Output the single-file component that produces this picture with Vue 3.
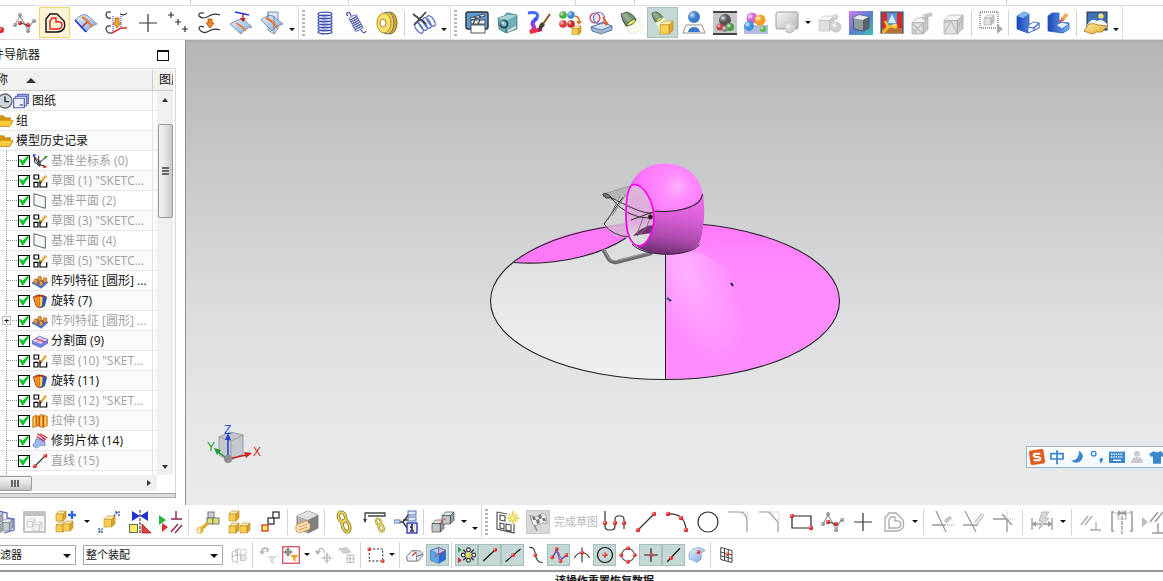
<template>
	<div class="app">
		<svg class="defs" aria-hidden="true">
			<defs>
				<linearGradient id="gBlue" x1="0" y1="0" x2="1" y2="1">
					<stop offset="0" stop-color="#e6f0fb" />
					<stop offset="1" stop-color="#7ea6da" />
				</linearGradient>
				<linearGradient id="gGold" x1="0" y1="0" x2="1" y2="1">
					<stop offset="0" stop-color="#fff3b0" />
					<stop offset="1" stop-color="#e0a21c" />
				</linearGradient>
				<linearGradient id="gGray" x1="0" y1="0" x2="1" y2="1">
					<stop offset="0" stop-color="#fafafa" />
					<stop offset="1" stop-color="#b4b4b4" />
				</linearGradient>
				<linearGradient id="gLamp" x1="0" y1="1" x2="1" y2="0">
					<stop offset="0" stop-color="#34503a" />
					<stop offset="0.5" stop-color="#9ab494" />
					<stop offset="1" stop-color="#3c5a40" />
				</linearGradient>
				<linearGradient id="gDeep" x1="0" y1="0" x2="1" y2="0">
					<stop offset="0" stop-color="#1747b8" />
					<stop offset="1" stop-color="#7fb0f0" />
				</linearGradient>
				<linearGradient id="gRain" x1="0" y1="0" x2="0" y2="1">
					<stop offset="0" stop-color="#2a5bff" />
					<stop offset="0.5" stop-color="#a03be0" />
					<stop offset="1" stop-color="#ff2a3c" />
				</linearGradient>
				<linearGradient id="gScene" x1="0" y1="0" x2="1" y2="1">
					<stop offset="0" stop-color="#d07cf0" />
					<stop offset="0.5" stop-color="#5a7fd0" />
					<stop offset="1" stop-color="#3cc0a8" />
				</linearGradient>
			</defs>
		</svg>

		<header class="top">
			<div class="strip">
				<i v-for="w in [191, 158, 227, 59, 372]" :key="w" :style="{ width: w + 'px' }"></i>
			</div>
			<nav class="bar">
				<div v-for="(group, g) in topGroups" :key="g" class="group">
					<span v-if="g" class="grip"></span>
					<template v-for="(item, i) in group" :key="i">
						<span v-if="item === '|'" class="sep"></span>
						<button v-else-if="item === 'v' || item === 'V'" :class="item === 'v' ? 'more' : 'more low'" aria-label="更多"></button>
						<button v-else :class="['tool', item, { on: active.has(item) }]" :aria-label="item" @click="toggle(item)">
							<svg viewBox="0 0 24 24" v-html="icons[item]"></svg>
						</button>
					</template>
				</div>
			</nav>
		</header>

		<main class="work">
			<aside class="side">
				<div class="title">
					<span>部件导航器</span>
					<button class="max" aria-label="最大化"></button>
				</div>
				<div class="frame">
					<div class="head">
						<span class="name">名称</span>
						<i class="tri up big"></i>
						<span class="layer">图层</span>
					</div>
					<div class="body">
						<ul class="list">
							<li v-for="(row, r) in rows" :key="r" :class="{ root: row.root, dim: row.dim, first: r === 0 }">
								<template v-if="row.root">
									<svg v-if="r === 0" viewBox="0 0 24 24" v-html="icons.clock"></svg>
									<svg viewBox="0 0 24 24" v-html="icons[row.icon]"></svg>
									<span>{{ row.text }}</span>
								</template>
								<template v-else>
									<span class="twig"><b v-if="row.plus">+</b></span>
									<label>
										<input v-model="row.checked" type="checkbox" />
										<svg viewBox="0 0 24 24" v-html="icons[row.icon]"></svg>
										<span>{{ row.text }}</span>
									</label>
								</template>
							</li>
						</ul>
						<div class="vscroll">
							<i class="tri up"></i>
							<div class="thumb"><i></i><i></i><i></i></div>
							<i class="tri down"></i>
						</div>
					</div>
					<div class="hscroll">
						<div class="hthumb"><i></i><i></i><i></i></div>
						<i class="tri right"></i>
					</div>
				</div>
				<div class="ledge"></div>
			</aside>

			<section class="view">
				<svg class="scene" viewBox="186 42 977 463" preserveAspectRatio="xMidYMid meet">
					<defs>
						<linearGradient id="white" x1="0" y1="0" x2="0" y2="1">
							<stop offset="0.2" stop-color="#dddee0" />
							<stop offset="0.5" stop-color="#e5e7e9" />
							<stop offset="1" stop-color="#eff0f2" />
						</linearGradient>
						<radialGradient id="skirt" gradientUnits="userSpaceOnUse" cx="0" cy="0" r="1" gradientTransform="translate(686 270) rotate(65) scale(100 40)">
							<stop offset="0" stop-color="#ffb0ff" />
							<stop offset="0.4" stop-color="#ffa2ff" />
							<stop offset="1" stop-color="#ff8dff" />
						</radialGradient>
						<linearGradient id="far" x1="0" y1="0" x2="0" y2="1">
							<stop offset="0" stop-color="#ff78fc" />
							<stop offset="0.6" stop-color="#ff84fe" stop-opacity="0.5" />
							<stop offset="1" stop-color="#ff90ff" stop-opacity="0" />
						</linearGradient>
						<radialGradient id="dome" gradientUnits="userSpaceOnUse" cx="677" cy="187" r="46">
							<stop offset="0" stop-color="#ffb0ff" />
							<stop offset="0.3" stop-color="#ff8cfe" />
							<stop offset="0.8" stop-color="#fd74fa" />
							<stop offset="1" stop-color="#ec68ea" />
						</radialGradient>
						<linearGradient id="neck" x1="0.6" y1="0" x2="0.45" y2="1">
							<stop offset="0.3" stop-color="#f06cec" />
							<stop offset="0.55" stop-color="#d85ed6" />
							<stop offset="0.8" stop-color="#ac4aac" />
							<stop offset="1" stop-color="#6c2c70" />
						</linearGradient>
						<linearGradient id="glass" x1="0" y1="0" x2="0" y2="1">
							<stop offset="0" stop-color="#ddb6dc" />
							<stop offset="0.6" stop-color="#e2a8de" />
							<stop offset="0.85" stop-color="#dcdcdc" />
						</linearGradient>
					</defs>

					<ellipse cx="665" cy="301" rx="174.500" ry="78.500" fill="url(#white)" />
					<path d="M665 250V379.500A174.500 78.500 0 0 0 704 224.500Z" fill="url(#skirt)" />
					<path d="M680 250L704 224.500A174.500 78.500 0 0 1 839 296C790 300 740 282 704 254Z" fill="url(#far)" />
					<path d="M514 262.500C545 235 590 227 640 223L626 238C592 260 545 265 514 262.500Z" fill="#fc7af8" />
					<path d="M514 262.500C545 265 592 260 626 238" fill="none" stroke="#222" stroke-width="1.100" />
					<ellipse cx="665" cy="301" rx="174.500" ry="78.500" fill="none" stroke="#222" stroke-width="1.100" />
					<path d="M665.500 254V379" stroke="#222" stroke-width="1" />
					<path d="M603 249L608 258Q611 263 617 262L652 253" fill="none" stroke="#6e6e6e" stroke-width="4" />
					<path d="M604 249L609 258Q612 261.500 617 260.500L651 252" fill="none" stroke="#a4a4a4" stroke-width="1" />

					<path d="M604 194L626 187L640 184L632 194L612 200Z" fill="#b4b5b6" stroke="#888" stroke-width="0.700" />
					<path d="M612 200L626 194L630 236L616 236L604 226Z" fill="#d4d4d4" fill-opacity="0.700" />
					<path d="M604 226L630 222V238Q614 236 604 226Z" fill="#d9a8d6" fill-opacity="0.700" />

					<path d="M626 210C626 192 630 183 638 176L646 168L703 194C706 214 703 234 699 244C692 252 677 255 665 254.500C650 254 636 249 630 240C626 232 625 222 626 210Z" fill="url(#neck)" />
					<path d="M627 200C629 176 645 163.500 665 163.500C687 163.500 702 178 702.500 195C698 207 676 213 652 211C646 195 640 186 632 185Z" fill="url(#dome)" />
					<path d="M652 211C676 213 701 208 702.500 194" fill="none" stroke="#222" stroke-width="1.100" />
					<path d="M632 244C642 257 688 258 699 245" fill="none" stroke="#33203a" stroke-width="1" />

					<path d="M633.500 184.500C644 184 654 202 654 218C654 234 646 246 639 246C630 245 626 232 626 215C626 198 628 186 633.500 184.500Z" fill="url(#glass)" />
					<path d="M633 236Q642 226 653 225V233Q642 234 633 236Z" fill="#703070" />
					<g fill="none" stroke="#333" stroke-width="1">
						<path d="M603 194Q606 192 611 197Q606 200 603 195Z" fill="#777" />
						<path d="M610 197Q628 219 650 218M610 197C628 206 642 214 653 213M623 197L604 224Q612 236 630 237M631 220L653 212" />
						<path d="M650 214Q650 228 637 236M620 196L608 220M626 194L612 216M643 218L637 234" stroke="#777" />
					</g>
					<circle cx="650.500" cy="217" r="2.400" fill="#222" />
					<path d="M633.500 184.500C644 184 654 202 654 218C654 234 646 246 639 246C630 245 626 232 626 215C626 198 628 186 633.500 184.500Z" fill="none" stroke="#ff00f4" stroke-width="1.700" />
					<path d="M667 298L671 301M731 283L733 286" stroke="#223" stroke-width="2" />
					<path d="M667 298L670 300" stroke="#2a62d8" stroke-width="1.500" />

					<g stroke-width="1.500" fill="none">
						<path d="M219 437L230 432L243 435V454L229 461L219 455Z" fill="#c4c8cc" stroke="#9a9fa4" stroke-width="1" />
						<path d="M219 437L231 441L243 435M231 441V460" stroke="#9a9fa4" stroke-width="1" />
						<path d="M228 459V438" stroke="#1b3fd0" />
						<path d="M225 440L228 433L231 440Z" fill="#1b3fd0" stroke="none" />
						<path d="M228 459L246 455" stroke="#d02020" />
						<path d="M244 452L252 453L246 458Z" fill="#d02020" stroke="none" />
						<path d="M228 459L218 452" stroke="#1f9a30" />
						<path d="M214 448L221 450L217 455Z" fill="#1f9a30" stroke="none" />
						<circle cx="228" cy="459" r="4" fill="#8c9094" stroke="none" />
					</g>
					<text x="224" y="434" fill="#2050e0">Z</text>
					<text x="207" y="451" fill="#1f9a30">Y</text>
					<text x="253" y="456" fill="#e02828">X</text>
				</svg>
				<div class="ime">
					<svg v-for="n in ['sogou', 'zh', 'moon', 'punct', 'keys', 'user', 'shirt']" :key="n" viewBox="0 0 24 24" v-html="icons[n]"></svg>
				</div>
			</section>
		</main>

		<footer>
			<nav v-for="(bar, n) in bottomBars" :key="n" :class="n ? 'bar small' : 'bar'">
				<template v-if="n">
					<label class="pick filter">
						<select aria-label="选择过滤器"><option>无选择过滤器</option></select>
					</label>
					<label class="pick">
						<select aria-label="选择范围"><option>整个装配</option></select>
					</label>
				</template>
				<div v-for="(group, g) in bar" :key="g" class="group">
					<span v-if="g" class="grip"></span>
					<template v-for="(item, i) in group" :key="i">
						<span v-if="item === '|'" class="sep"></span>
						<button v-else-if="item === 'v' || item === 'V'" :class="item === 'v' ? 'more' : 'more low'" aria-label="更多"></button>
						<button v-else-if="item === 'finish'" class="finish" disabled>
							<svg viewBox="0 0 24 24" v-html="icons.finish"></svg>
							<span>完成草图</span>
						</button>
						<button v-else :class="['tool', item, { on: active.has(item) }]" :aria-label="item" @click="toggle(item)">
							<svg viewBox="0 0 24 24" v-html="icons[item]"></svg>
						</button>
					</template>
				</div>
			</nav>
			<p class="status">该操作重置恢复数据</p>
		</footer>
	</div>
</template>

<script setup>
import { ref } from 'vue'

const YELLOW = ['#fff0a8', '#fbd050', '#e0a428']
const GRAY = ['#f4f4f4', '#e0e0e0', '#c8c8c8']
const STEEL = ['#e2e8ea', '#c0c8cc', '#98a2a8']

// small shapes shared by many icons
const line = (d, c = '#333', w = 1.2, extra = '') => `<path d="${d}" fill="none" stroke="${c}" stroke-width="${w}" ${extra}/>`
const fill = (d, c, s = 'none') => `<path d="${d}" fill="${c}" stroke="${s}" stroke-width=".8"/>`
const ball = (x, y, r = 2, c = '#e02828') => `<circle cx="${x}" cy="${y}" r="${r}" fill="${c}"/><circle cx="${x - r / 3}" cy="${y - r / 3}" r="${r * 0.6}" fill="#fff" fill-opacity=".25"/><circle cx="${x - r / 3}" cy="${y - r / 3}" r="${r * 0.3}" fill="#fff" fill-opacity=".6"/>`
const cube = (x, y, s, [t, f, e] = YELLOW, k = '#b08828') => {
	const a = s * 0.3
	const b = s * 0.7
	return `<g stroke="${k}" stroke-width=".6" stroke-linejoin="round">`
		+ `<path d="M${x + a} ${y}h${b}l${-a} ${a}h${-b}z" fill="${t}"/>`
		+ `<path d="M${x} ${y + a}h${b}v${b}h${-b}z" fill="${f}"/>`
		+ `<path d="M${x + b} ${y + a}l${a} ${-a}v${b}l${-a} ${a}z" fill="${e}"/></g>`
}
const spline = line('M3 14L8 5L16 19L21 10', '#999', 1.2) + ball(3, 14, 2, '#888') + ball(8, 4, 2, '#888') + ball(16, 20, 2, '#888') + ball(22, 10, 2, '#888') + ball(8, 12, 2.2) + ball(16, 14, 2.2) + line('M8 12L16 14', '#444')
const sheet = fill('M1 9Q8 2 13 4L23 13Q17 14 12 21Z', 'url(#gBlue)', '#6a7fa8')
const lamp = fill('M1 3L7 1Q13 3 16 8L6 15Q2 10 1 3Z', 'url(#gLamp)', '#34483a') + fill('M6 15Q9 9 16 8Q15 14 6 15Z', '#e8ec60', '#34483a')
const sketch = '<g fill="#fff" stroke="#000" stroke-width="1.8"><path d="M3 3h7v6h-7zM3 14h6v7h-6zM12 11v10h10v-7"/></g>' + line('M13 14L21 4', '#e8a020', 3) + line('M12 16L14 13', '#222', 2)
const loop = (c, w) => line('M3 21V8L7 3H14L21 10Q24 20 14 21Z', c, w) + line('M7 18V10L9 7H13V11Q19 10 19 14Q19 18 14 18Z', c === '#111' ? '#e82020' : c, w)
const chain = (x, y, s) => `<g transform="translate(${x} ${y}) scale(${s})" fill="none" stroke="#8c7c20" stroke-width="3.4"><ellipse cx="7" cy="6" rx="3.500" ry="5" transform="rotate(-20 7 6)"/><ellipse cx="11" cy="15" rx="3.500" ry="6" transform="rotate(-20 11 15)"/><g stroke="#ead860" stroke-width="1.8"><ellipse cx="7" cy="6" rx="3.500" ry="5" transform="rotate(-20 7 6)"/><ellipse cx="11" cy="15" rx="3.500" ry="6" transform="rotate(-20 11 15)"/></g></g>`
const turn = fill('M2 6Q12 0 22 6L19 19Q12 25 6 19Z', '#2a55c8', '#233') + fill('M2 6Q8 2 12 3V22Q8 22 6 19Z', '#f09020', '#a03010') + fill('M12 5L16 6L15 19L12 21Z', '#ffd050') + line('M5 6Q12 2 19 6', '#c03018', 2)
const faded = (s) => `<g opacity=".45">${s}</g>`
const springLoops = (c) => [3, 6, 9, 12, 15, 18, 21].map((y) => `<ellipse cx="12" cy="${y}" rx="7" ry="1.8" fill="none" stroke="${c}" stroke-width="1.3"/>`).join('')

const icons = {
	dot: ball(20, 19, 3),
	spline,
	offset: loop('#111', 1.4),
	project: sheet + line('M8 6Q14 9 18 16', '#f07828', 2) + line('M7 17L13 11', '#d02020', 1.3) + line('M1 9L12 21', '#2038e0', 1.8),
	combine: line('M6 1Q1 0 1 4Q2 8 6 7M15 3Q20 5 22 2M6 15Q1 14 1 18Q2 23 7 22') + line('M8 5V20M16 5V18', '#3848d0', 1.2, 'stroke-dasharray="1 1"') + line('M7 22L16 17L22 17', '#e03030', 1.5) + fill('M10 7H14V12H16L12 17L8 12H10Z', '#f0a030', '#b07010'),
	plus: line('M12 3V21M3 12H21', '#333', 1.2),
	pluses: line('M4 1V7M1 4H7M11 8V14M8 11H14M18 15V21M15 18H21', '#333', 1.2),
	mirror: line('M6 2Q0 1 1 5Q5 9 11 5Q16 2 22 4M6 16Q1 14 1 18Q5 24 11 20Q16 17 22 19') + fill('M10 8H14V12H16L12 17L8 12H10Z', '#f08020', '#b05010'),
	drop: fill('M1 13Q8 8 14 8L23 16Q16 17 12 23Z', 'url(#gBlue)', '#6a7fa8') + line('M7 12Q13 15 17 20', '#f07828', 1.8) + line('M6 1L20 4', '#2038e0', 1.6) + line('M14 3V8', '#c02020', 1.4) + fill('M11 7H17L14 11Z', '#c02020'),
	cross: fill('M8 1H18V18L14 23L8 19Z', '#dfe9f6', '#60789a') + fill('M1 9Q8 3 13 5L23 13Q17 14 12 20Z', 'url(#gBlue)', '#60789a') + line('M8 1V7M14 5V23', '#60789a', 0.8) + line('M6 7Q13 10 17 17', '#f07828', 2),
	spring: springLoops('#3a4cb0'),
	spring2: `<g transform="translate(12 12) rotate(-28) scale(.62 .72) translate(-12 -12)">${springLoops('#4452a8')}</g>` + line('M7 5Q6 0 3 2Q2 4 4 5M17 19Q20 24 22 20', '#4452a8'),
	wheel: '<ellipse cx="15" cy="12" rx="7" ry="11" fill="#d8aa28" stroke="#8a6a10"/><ellipse cx="12" cy="12" rx="7" ry="11" fill="#f0cc48" stroke="#6070a0"/><ellipse cx="9" cy="12" rx="7" ry="10" fill="#fbe070" stroke="#b08c20"/><ellipse cx="8" cy="12" rx="3" ry="4" fill="#fff" stroke="#a88420"/>',
	springcut: '<g fill="none" stroke="#5a70c0" stroke-width="1.4"><ellipse cx="7" cy="17" rx="3" ry="6" transform="rotate(-35 7 17)"/><ellipse cx="11" cy="14" rx="3" ry="6" transform="rotate(-35 11 14)"/><ellipse cx="15" cy="12" rx="3" ry="6" transform="rotate(-35 15 12)"/><ellipse cx="19" cy="10" rx="3" ry="6" transform="rotate(-35 19 10)"/></g>' + line('M1 3L14 13M14 1L2 14', '#444', 1.8),
	movie: '<rect x="1" y="1" width="22" height="17" rx="2" fill="#5a9ad8" stroke="#333" stroke-width="1.500"/>' + fill('M5 7L19 3L20 5L6 9ZM6 9H20V13H6Z', '#f4f4f4', '#333') + line('M9 6L12 7M14 5L16 6M10 9L8 13M15 9L13 13', '#333', 1.2) + '<rect x="6" y="14" width="14" height="8" fill="#fff" stroke="#555"/>',
	camera: fill('M2 7L8 5L11 2L16 3L21 4V18L10 22L3 18Z', '#6eb0b4', '#3c7478') + fill('M2 7L10 10L21 4L12 4Z', '#a8d4d4') + line('M10 10V21', '#3c7478') + ball(8, 13, 4.5, '#285058') + ball(8, 13, 2.5, '#88b8e0') + line('M12 20L20 16', '#ddd', 2),
	brush: line('M1 2Q13 0 10 7Q5 12 6 15', '#4a68ff', 3) + line('M10 7Q4 12 6 14Q9 18 3 21L15 18', 'url(#gRain)', 4) + line('M23 3L16 13', '#8a5428', 2) + fill('M15 11L18 14L12 21Q11 16 13 13Z', '#4a3a30'),
	materials: ball(5, 4, 3.8, '#48b040') + ball(13, 4, 3.8, '#3c8cd0') + ball(5, 13, 3.8, '#e03838') + ball(13, 13, 3.8, '#c82828') + cube(14, 15, 9) + line('M17 5Q22 6 21 11', '#e07020', 1.5) + fill('M18 10H24L21 14Z', '#e07020'),
	stamp: '<circle cx="6" cy="7" r="5" fill="#f6e0ea" stroke="#c04068" stroke-width="1.200"/><circle cx="10" cy="7" r="5.500" fill="none" stroke="#5878c8" stroke-width="1.200"/>' + fill('M2 16L14 12L23 15V19L12 23L3 20Z', '#a0b8d8', '#506890') + fill('M2 16L14 12L23 15L12 19Z', '#d8e4f4', '#506890') + line('M14 6L17 11', '#e06020', 1.8) + fill('M14 11H20L17 15Z', '#e06020'),
	lamp: fill('M6 15L16 8L24 15Q20 22 10 23Z', '#f8f8ec', '#e4e4dc') + lamp,
	lampbox: fill('M5 12L12 7L22 13L9 22Z', '#f2f4d8') + `<g transform="scale(.72)">${lamp}</g>` + cube(9, 10, 13),
	usermat: ball(12, 6, 6, '#3a7ad0') + fill('M4 14H20L23 22H1Z', '#fff', '#777') + fill('M6 21Q7 16 12 16Q17 16 18 21Z', '#3a7ad0'),
	studio: '<rect width="24" height="24" fill="#c8c8c8"/><path d="M0 0H24V2H0ZM0 22H24V24H0Z" fill="#444"/>' + ball(12, 9, 6, '#555') + ball(7, 16, 3.6, '#c83838') + ball(17, 16, 4, '#48a040') + ball(12, 18, 3, '#888'),
	balls: '<rect y="14" width="24" height="9" fill="#b4bce0"/>' + ball(8, 7, 5.5, '#d060d0') + ball(16, 9, 5.5, '#f8a020') + ball(5, 15, 5, '#3c94e0') + ball(19, 18, 3, '#50c040'),
	screen: '<rect x="1" y="1" width="22" height="17" rx="2" fill="url(#gGray)" stroke="#999"/>' + ball(15, 17, 5, '#d4d4d4') + line('M11 20Q15 24 19 19', '#bbb'),
	shapes: cube(1, 5, 15, GRAY, '#bbb') + ball(17, 6, 3, '#ccc') + ball(18, 16, 5.5, '#ccc'),
	cubeview: '<rect width="24" height="24" fill="url(#gScene)"/>' + fill('M4 7L10 4L20 6V17L14 20L5 18Z', '#8e9ca0', '#445') + fill('M4 7L10 4L20 6L14 9Z', '#e8eeee') + fill('M14 9L20 6V17L14 20Z', '#56646a'),
	stage: '<rect x="1" y="1" width="22" height="21" fill="#5a94d8" stroke="#333"/><path d="M2 2H7V18H2ZM17 2H22V18H17Z" fill="#d82828"/><path d="M2 17H22V22H2Z" fill="#b87038"/>' + fill('M12 3L8 12H16Z', '#d8ecf8') + line('M3 22L8 16L14 15', '#e8b828', 3) + line('M8 16L5 10', '#f4cc40', 2.5) + ball(15, 15, 2.5, '#f4cc40'),
	wirecam: cube(1, 7, 16, GRAY, '#999') + line('M1 12L12 23M1 17L6 23M2 22L12 12', '#bbb') + line('M12 6L21 3', '#c4c4c4', 4) + ball(14, 6, 3, '#bbb'),
	wirebox: cube(2, 4, 19, GRAY, '#999') + line('M2 12L9 10L15 22M3 21L9 10M21 6L16 16', '#bbb'),
	region: '<rect x="1" y="1" width="18" height="16" fill="#fff" stroke="#777" stroke-width="1.300" stroke-dasharray="1 1"/>' + cube(5, 4, 10, GRAY, '#aaa') + fill('M18 13L24 18L18 23Z', '#aaa'),
	block: fill('M1 5L8 1L13 3V13L23 12V17L12 22L1 18Z', 'url(#gDeep)', '#2858b8') + fill('M1 5L8 1L13 3L7 7Z', '#8ab4f0') + fill('M12 15L17 11L23 12V17L12 22Z', '#fff', '#3468c8') + line('M12 16L18 17L23 12M18 17V20', '#3468c8'),
	blockedit: fill('M1 5L5 2H12V11L22 12V18L16 22L1 20Z', 'url(#gDeep)', '#2858b8') + fill('M9 14L15 11L22 13L15 18Z', '#e4eefc', '#3468c8') + line('M20 3L15 9', '#f0b060', 4) + line('M16 8L13 11', '#d86060', 3),
	landscape: '<rect x="3" y="1" width="20" height="18" fill="#3c70b0" stroke="#234"/>' + ball(17, 5, 2.6, '#ffe060') + fill('M3 14Q8 6 13 10Q18 7 23 13V17H3Z', '#f4f4f4') + fill('M5 13Q10 12 14 14L23 15L18 21Q12 20 8 23L0 20Z', 'url(#gGold)', '#b06818'),

	boxes: `<g opacity=".9">${cube(-2, 3, 13, STEEL, '#667')}${cube(9, 9, 12, STEEL, '#667')}${cube(0, 12, 11, STEEL, '#667')}</g>` + line('M6 1L15 3V8L22 9V20L12 23', '#5a62c0', 1.3),
	window: faded('<rect x="1" y="2" width="21" height="20" fill="#eee" stroke="#555" stroke-width="1.500"/><path d="M1 2H22V6H1Z" fill="#777"/>' + cube(4, 9, 8, GRAY, '#777') + cube(10, 12, 9, GRAY, '#777')),
	addcomp: cube(2, 1, 10) + cube(2, 12, 10) + cube(9, 11, 10) + line('M18 1V9M14 5H22', '#2a68d8', 2.4),
	move: cube(7, 6, 11) + line('M17 6L21 2M2 22L6 18M18 2H22V6M2 18V22H6', '#3a58b0', 1.4, 'stroke-dasharray="2 1"'),
	mirrorasm: fill('M4 1L12 6L4 11ZM20 1L12 6L20 11Z', '#2430d0') + line('M12 0V24', '#444', 1.2, 'stroke-dasharray="3 1"') + '<rect x="1.500" y="14.500" width="8" height="8" fill="#f8f060" stroke="#666"/>' + fill('M14 14V23H23Z', '#e04040', '#a02020'),
	constrain: fill('M0 5L7 10L0 15Z', '#30b040') + fill('M3 13L9 17L3 22Z', '#d83030') + line('M17 1V9M12 9H23M12 22L19 14M16 23L23 15', '#8a2850', 1.4),
	wrench: '<g stroke="#777" fill="#dde070"><rect x="12" y="2" width="6" height="6" fill="#c8d0dc"/><rect x="11" y="8" width="6" height="6"/><rect x="17" y="8" width="6" height="6"/></g>' + line('M4 20L12 13', '#d8ac30', 3.5) + ball(4, 20, 3.5, '#e0b838') + '<circle cx="3" cy="21" r="1.500" fill="#fff"/>',
	tricube: cube(2, 1, 10) + cube(2, 13, 10) + cube(13, 13, 10),
	stack: '<g fill="#fff" stroke="#333" stroke-width="1.300"><rect x="15" y="2" width="6" height="6"/><rect x="10" y="8" width="6" height="6"/><rect x="4" y="15" width="6" height="6" fill="#f8f060" stroke="#d83030"/></g>',
	tagbox: fill('M2 6L13 1L23 5V18L13 23L2 18Z', '#b0b0b0', '#666') + fill('M2 6L13 1L23 5L13 10Z', '#e0e0e0') + fill('M13 10L23 5V18L13 23Z', '#808080') + fill('M1 15L11 11L15 14V19L4 23L1 21Z', '#fbe4b8', '#d08830') + line('M4 17L12 14M4 20L12 17', '#d89850', 1),
	link: chain(3, 1, 1),
	caliper: line('M2 12V3H22V6H5', '#444', 1.3) + fill('M0 9H4L2 13Z', '#444') + chain(11, 8, 0.65),
	tree: line('M1 12H9L15 4M9 10H14M9 12L13 18', '#333', 1.4) + '<g fill="#dce8f8" stroke="#5870b0"><rect x="14" y="1" width="8" height="4"/><rect x="14" y="7" width="8" height="4"/><rect x="0" y="10" width="6" height="3"/></g><rect x="13" y="13" width="10" height="10" fill="#e8e8ff" stroke="#2030b0" stroke-width="1.300"/>' + line('M16 21H20M18 20V17H16M18 14V16', '#222', 1.6),
	linkcubes: cube(1, 10, 12, STEEL, '#333') + cube(11, 2, 12, STEEL, '#333') + line('M8 14L15 8', '#d83030', 1.2, 'stroke-dasharray="2 1"'),
	newsketch: line('M2 2V19L19 23V14M2 2L12 4M5 5V10L10 11V6ZM5 13V18L9 19V14ZM11 14V20L16 21V15Z', '#555', 1.2) + line('M18 1V14M12 8H24M14 4L22 12M22 4L14 12', '#e8c828', 1.4) + ball(18, 8, 2, '#fff080'),
	finish: '<rect width="24" height="24" fill="#d8d8d8" stroke="#bbb"/>' + line('M4 6L11 21', '#888', 1.5) + fill('M4 5Q9 9 13 5Q17 2 20 5L21 14Q17 11 14 14Q11 16 7 15Z', '#eee', '#999') + fill('M6 6L9 7L10 10L7 10ZM12 6L15 4L16 8L13 9ZM10 10L13 9L14 13L11 14ZM16 8L19 8L20 11L17 11Z', '#777'),
	profile: line('M2 1V16Q2 20 6 20H8Q12 20 12 16V10Q12 6 15 6H18Q21 6 21 10V19', '#333') + ball(2, 13, 2.2) + ball(12, 13, 2.2) + ball(21, 13, 2.2),
	line: line('M4 20L20 4', '#333') + ball(4, 20, 2.3) + ball(20, 4, 2.3),
	arc: line('M3 4Q20 3 21 20', '#333') + ball(3, 4, 2.3) + ball(16, 8, 2.3) + ball(21, 20, 2.3),
	circle: '<circle cx="12" cy="12" r="10" fill="none" stroke="#333" stroke-width="1.200"/>',
	fillet: line('M1 2H13Q20 3 20 12V22', '#999') + line('M14 2H21V9', '#bbb', 1, 'stroke-dasharray="1 1"'),
	chamfer: line('M1 2H11L20 12V22', '#999') + line('M12 2H21V10', '#bbb', 1, 'stroke-dasharray="1 1"'),
	rect: line('M3 6H22V18H3Z', '#222', 1.2) + ball(3, 6, 2.3) + ball(22, 18, 2.3),
	spline2: spline,
	plus2: line('M12 3V21M3 12H21', '#333', 1.2),
	offset2: loop('#aaa', 1.3),
	trim: line('M5 1L15 22M1 15H14', '#999', 1.3) + line('M14 15H23', '#999', 1, 'stroke-dasharray="1 1"') + line('M14 12L20 7', '#c8c8c8', 4),
	extend: line('M3 1L14 22M1 15H16', '#999', 1.3) + line('M14 13L21 4', '#bbb', 4) + line('M14 13L21 4', '#eee', 2),
	corner: line('M0 9H14V22M9 4L19 15', '#999', 1.4) + line('M14 0V9H23', '#bbb', 1, 'stroke-dasharray="1 1"'),
	dimension: line('M2 8V20M22 8V20M2 14H22', '#999', 1.3) + fill('M2 14L6 11V17ZM22 14L18 11V17Z', '#999') + fill('M12 2H19L15 8H19L9 19L12 11H9Z', '#d8d8d8', '#aaa'),
	relation: line('M2 15L9 6M6 15L13 6M17 12V20M11 20H22', '#aaa', 1.3),
	symmetric: line('M4 2H2V21H4M20 2H22V21H20', '#999', 1.5) + line('M12 1V24', '#888', 1.2, 'stroke-dasharray="4 1"') + line('M4 3H20M8 3V9H16V3', '#bbb') + fill('M8 0L12 3L8 6ZM16 0L12 3L16 6Z', '#999'),
	autorel: fill('M1 7L7 12L1 17Z', '#bbb') + line('M9 12L17 2M14 12L22 2M17 13V23M11 23H24', '#999', 1.4),

	asmfilter: faded(line('M3 8V20L10 22V5M3 8L14 3M3 14L14 11V20M8 3V13', '#666') + '<circle cx="18" cy="8" r="4" fill="none" stroke="#666"/><circle cx="18" cy="16" r="4" fill="#ccc" stroke="#666"/>'),
	undofilter: faded(line('M10 8Q15 3 9 3Q3 3 4 9', '#666', 2.5) + fill('M0 7H8L4 12Z', '#666') + fill('M12 14H23L19 18V23L16 21V18Z', '#ccc', '#777')),
	selfilter: '<rect x="1" y="1" width="22" height="22" fill="#fff" stroke="#d04050" stroke-width="1.600"/><circle cx="8" cy="8" r="3.500" fill="none" stroke="#444"/>' + line('M8 2V14M2 8H14', '#444') + fill('M11 12H22L18 16V21L15 19V16Z', '#f0a020'),
	rotatesel: faded(line('M4 8Q8 -2 13 9M16 9V23M9 16H23', '#555', 1.6) + '<circle cx="16" cy="16" r="4" fill="none" stroke="#555"/>' + fill('M0 6L8 7L3 12Z', '#555')),
	lampgrid: faded(fill('M1 4L12 2L17 8L8 10Z', '#999', '#555') + line('M12 12H21V22H12ZM16 12V22M12 17H21', '#555')),
	marquee: line('M3 4H21V20H3Z', '#333', 1.4, 'stroke-dasharray="3 2"') + ball(3, 4, 2.5) + ball(21, 20, 2.5),
	shade: fill('M1 14L8 6H15Q22 6 23 12L17 20H2Z', '#d8dce4', '#556') + fill('M1 14L8 6Q14 8 14 14V20H2Z', '#f2f4f8', '#556') + line('M14 14L22 11', '#556') + line('M8 13L14 8', '#e04040', 1.6),
	bluebox: fill('M2 6L13 2L22 6V18L13 23L2 19Z', '#5aa8ec', '#2860b0') + fill('M2 6L13 2L22 6L13 11Z', '#a8d0f8', '#2860b0') + fill('M13 11L22 6V18L13 23Z', '#2c6ad0') + line('M13 2V11L22 6M13 11L7 15', '#d83848', 1.2),
	snapall: fill('M0 1L5 5L0 9Z', '#20a838') + fill('M0 15L5 19L0 23Z', '#d03030') + '<g fill="#fff" stroke="#333" stroke-width="1.600"><circle cx="14" cy="5" r="2.500"/><circle cx="14" cy="19" r="2.500"/><circle cx="7" cy="12" r="2.500"/><circle cx="21" cy="12" r="2.500"/></g>' + line('M7 5L11 9M21 5L17 9M7 19L11 15M21 19L17 15', '#333', 1.8) + ball(14, 12, 3.2, '#f0d020'),
	endpoint: line('M3 20L19 5', '#111', 1.5) + ball(19, 5, 2.6),
	midpoint: line('M2 21L22 4', '#111', 1.5) + ball(12, 12, 2.8),
	control: line('M3 2Q10 1 11 10Q12 22 21 22', '#333', 1.5) + ball(11, 12, 2.6),
	poles: line('M3 16L9 4L13 20L22 12', '#8a30c0', 1.5) + line('M3 15Q11 2 13 13Q15 20 22 12', '#446', 1) + ball(3, 15, 2.6) + ball(9, 4, 2.6) + ball(14, 20, 2.6) + ball(22, 12, 2.6),
	intersect: line('M12 2V22M2 16Q5 9 12 9Q19 9 22 16', '#333', 1.5) + ball(12, 9, 2.6),
	center: '<circle cx="12" cy="12" r="10" fill="none" stroke="#111" stroke-width="1.600"/>' + line('M12 8V16M8 12H16', '#e02020', 1.2) + ball(12, 12, 2.4),
	quadrant: '<circle cx="12" cy="12" r="8.500" fill="none" stroke="#666" stroke-width="1.500"/>' + ball(12, 3, 2.8) + ball(12, 21, 2.8) + ball(3, 12, 2.8) + ball(21, 12, 2.8),
	existing: line('M12 3V21M3 12H21', '#111', 1.5) + ball(12, 12, 2.6),
	oncurve: line('M3 21L20 3', '#111', 1.5) + ball(8, 16, 2.8),
	onface: fill('M1 12Q3 2 16 2L23 6Q15 9 18 17L12 22Q6 18 2 18Z', 'url(#gBlue)', '#6a90c8') + ball(14, 8, 2.6),
	grid: line('M5 2L20 6V22L5 18ZM10 3V20M15 5V21M5 8L20 12M5 13L20 17', '#333', 1.2) + ball(14, 11, 2.4),

	clock: '<circle cx="12" cy="12" r="10.500" fill="#cfd6dc" stroke="#667" stroke-width="2"/>' + line('M12 5V13H18', '#223', 2),
	drawing: '<g fill="#fff" stroke="#4a5cb0" stroke-width="1.600"><path d="M7 2H23V16H7Z" fill="#aab8ec"/><path d="M4 5H20V19H4Z"/><path d="M1 8H17V22H1Z" fill="#eef"/></g>' + line('M10 18H15', '#889', 3),
	folder: fill('M1 6L4 4H10L12 7H20V11L24 12L19 20H2Z', '#d89410', '#a86c00') + fill('M5 11H24L19 20H1Z', '#fccc3c', '#c08408'),
	csys: line('M10 4V17L20 20M10 17L2 4', '#222', 1.5) + line('M4 6L12 14L21 6M4 6V14L12 20V11', '#222', 1.5) + fill('M18 4L24 5L20 9Z', '#20a030') + fill('M17 18L23 21L17 23Z', '#d02020') + fill('M1 2H6L3 7Z', '#2040d0'),
	sketch,
	plane: `<path d="M3 1L20 6V23L3 18Z" fill="#f4faf4" stroke="#555" stroke-width="1.400"/>`,
	pattern: fill('M0 15L9 9L24 14L14 23Z', '#4a7ad8', '#2040a0') + [[3, 9], [9, 5], [11, 12], [17, 7]].map(([x, y]) => `<rect x="${x}" y="${y}" width="5" height="7" rx="2" fill="#f0a030" stroke="#a85010"/>`).join(''),
	revolve: turn,
	divide: fill('M0 12L11 5L24 10V15L13 22L0 16Z', '#7484e8', '#4454b8') + fill('M0 12L11 5L24 10L13 17Z', '#d0d8fc', '#6070d0') + line('M5 8L20 14', '#d04070', 2) + line('M4 15L19 8', '#e07080'),
	extrude: fill('M1 6Q5 1 10 5L14 2L23 5V19L15 22L9 19L1 22Z', '#f0a020', '#b05010') + line('M6 5V20M11 5V20M17 4V21', '#c03820', 1.6) + line('M14 6V19M4 6V20M20 6V19', '#ffe070', 2),
	trimsheet: fill('M6 8Q11 11 18 7L20 19Q12 17 7 23L1 19Q6 14 6 8Z', '#9cb8f0', '#4460b0') + line('M8 1L21 10M12 1L23 7M7 5L19 13', '#d02838', 1.8),
	straight: line('M4 20L20 4', '#222', 1.8) + ball(4, 20, 3) + ball(20, 4, 3),

	sogou: '<rect x="1" y="1" width="22" height="22" rx="3" fill="#e25a1c" transform="rotate(-8 12 12)"/>' + line('M17 7H10Q7 7 7 9.500Q7 12 12 12Q17 12 17 14.500Q17 17 14 17H7', '#fff', 3),
	zh: line('M3 7H21V15H3ZM12 2V23', '#3c86cc', 2.6),
	moon: fill('M15 3Q24 8 19 16Q12 25 3 17Q15 18 15 3Z', '#3c86cc'),
	punct: '<circle cx="7" cy="7" r="3.500" fill="none" stroke="#3c86cc" stroke-width="2"/>' + fill('M16 14H21Q21 20 16 22Q18 19 16 18Z', '#3c86cc'),
	keys: '<rect x="0" y="4" width="24" height="17" fill="#3c86cc"/>' + line('M3 8H21M3 12H21', '#fff', 2.2, 'stroke-dasharray="2 1.500"') + line('M6 17H18', '#fff', 2),
	user: '<circle cx="12" cy="7" r="4.500" fill="#ccc"/>' + fill('M3 21Q3 12 12 12Q21 12 21 21Z', '#ccc'),
	shirt: fill('M7 3Q12 7 17 3L24 8L20 12L18 11V22H6V11L4 12L0 8Z', '#3c86cc'),
}

const topGroups = [
	['dot', 'spline', 'offset', 'project', 'combine', 'plus', 'pluses', 'mirror', 'drop', 'cross', 'V'],
	['spring', 'spring2', 'wheel', '|', 'springcut', 'V'],
	['movie', 'camera', 'brush', 'materials', 'stamp', 'lamp', 'lampbox', 'usermat', 'studio', 'balls', 'screen', 'v', 'shapes', 'cubeview', 'stage', 'wirecam', 'wirebox', '|', 'region', '|', 'block', 'blockedit', '|', 'landscape', 'V'],
]

const bottomBars = [
	[
		['boxes', 'window', 'addcomp', 'v', 'move', 'mirrorasm', 'constrain', '|', 'wrench', 'tricube', 'stack', '|', 'tagbox', '|', 'link', 'caliper', 'tree', '|', 'linkcubes', 'v', 'V'],
		['newsketch', 'finish', 'profile', 'line', 'arc', 'circle', 'fillet', 'chamfer', 'rect', 'spline2', 'plus2', 'offset2', 'v', '|', 'trim', 'extend', 'corner', '|', 'dimension', 'v', '|', 'relation', 'symmetric', 'autorel'],
	],
	[
		['asmfilter', '|', 'undofilter', 'selfilter', 'v', 'rotatesel', 'lampgrid', '|', 'marquee', 'v', '|', 'shade', 'bluebox', '|', 'snapall', 'endpoint', 'midpoint', 'control', 'poles', 'intersect', 'center', 'quadrant', 'existing', 'oncurve', 'onface', '|', 'grid'],
	],
]

const active = ref(new Set(['offset', 'lampbox', 'bluebox', 'snapall', 'endpoint', 'midpoint', 'poles', 'center', 'existing', 'oncurve']))
const toggle = (name) => {
	if (!active.value.delete(name)) active.value.add(name)
}

const feature = (icon, text, dim = true, plus = false) => ({ icon, text, dim, plus, checked: true })
const rows = ref([
	{ root: true, icon: 'drawing', text: '图纸' },
	{ root: true, icon: 'folder', text: '组' },
	{ root: true, icon: 'folder', text: '模型历史记录' },
	feature('csys', '基准坐标系 (0)'),
	feature('sketch', '草图 (1) "SKETC...'),
	feature('plane', '基准平面 (2)'),
	feature('sketch', '草图 (3) "SKETC...'),
	feature('plane', '基准平面 (4)'),
	feature('sketch', '草图 (5) "SKETC...'),
	feature('pattern', '阵列特征 [圆形] ...', false),
	feature('revolve', '旋转 (7)', false),
	feature('pattern', '阵列特征 [圆形] ...', true, true),
	feature('divide', '分割面 (9)', false),
	feature('sketch', '草图 (10) "SKET...'),
	feature('revolve', '旋转 (11)', false),
	feature('sketch', '草图 (12) "SKET...'),
	feature('extrude', '拉伸 (13)'),
	feature('trimsheet', '修剪片体 (14)', false),
	feature('straight', '直线 (15)'),
])
</script>

<style>
body {
	margin: 0;
	overflow: hidden;
}
</style>

<style scoped>
.app {
	display: flex;
	flex-direction: column;
	height: 100vh;
	overflow: hidden;
	background: #fff;
	color: #111;
	font: 12px/20px "Open Sans", "Noto Sans CJK SC", sans-serif;
}
.app * {
	box-sizing: border-box;
}
.defs {
	position: absolute;
	width: 0;
	height: 0;
}
button {
	padding: 0;
	border: 0;
	background: none;
	font: inherit;
}
svg {
	flex: none;
	display: block;
}

/* toolbars */
.strip {
	display: flex;
	height: 6px;
	border-bottom: 1px solid #dcdcdc;
}
.strip i {
	border-right: 1px solid #d4d4d4;
}
.bar {
	display: flex;
	height: 34px;
	overflow: hidden;
	border-bottom: 1px solid #dedede;
}
.top .bar {
	padding-left: 8px;
}
.top .group:first-child {
	margin-left: -31px;
}
.group {
	display: flex;
	flex: none;
	align-items: center;
	padding-right: 1px;
	border-right: 1px solid #dcdcdc;
}
footer .group:last-child {
	border-right: 0;
}
footer .bar:first-child .group:first-child {
	margin-left: -12px;
}
.grip {
	width: 3px;
	height: 26px;
	margin: 0 3px;
	background: repeating-linear-gradient(#b4b4b4 0 2px, transparent 2px 4px);
}
.top .grip {
	margin-right: 4px;
}
.sep {
	width: 1px;
	height: 26px;
	margin: 0 3px 0 2px;
	background: #d4d4d4;
}
.tool {
	display: flex;
	align-items: center;
	justify-content: center;
	width: 31px;
	height: 31px;
	border: 1px solid transparent;
}
.tool svg {
	width: 24px;
	height: 24px;
}
.tool.on {
	background: #c6d8d6;
	border-color: #a4c0bc;
}
.tool.offset.on {
	background: #fdf4d8;
	border-color: #f4d468;
}
.more {
	width: 12px;
	height: 31px;
}
.more::after {
	content: "";
	display: block;
	margin: 0 auto;
	width: 0;
	border: 3px solid transparent;
	border-top-color: #111;
	border-bottom: 0;
}
.more.low {
	width: 10px;
	padding-top: 14px;
}
.finish {
	display: flex;
	align-items: center;
	gap: 4px;
	width: 77px;
	padding-left: 4px;
	color: #b8b8b8;
	font-size: 11px;
	white-space: nowrap;
}
.finish svg {
	width: 24px;
	height: 24px;
}
.bar.small {
	height: 33px;
	align-items: center;
	border-bottom: 2px solid #94989c;
}
.small .tool {
	width: 23px;
	height: 22px;
}
.small .tool svg {
	width: 18px;
	height: 18px;
}
.small .more {
	width: 10px;
}
.pick {
	position: relative;
	flex: none;
	width: 140px;
	margin-right: 4px;
}
.pick.filter {
	width: 123px;
	margin-left: -47px;
	margin-right: 7px;
}
.pick select {
	display: block;
	appearance: none;
	width: 100%;
	height: 20px;
	padding: 0 2px;
	border: 1px solid #a8a8a8;
	border-radius: 0;
	background: #fff;
	color: #111;
	font: 11px/18px "Open Sans", "Noto Sans CJK SC", sans-serif;
}
.pick::after {
	content: "";
	position: absolute;
	right: 5px;
	top: 9px;
	border: 4px solid transparent;
	border-top-color: #111;
	border-bottom: 0;
}
.status {
	height: 9px;
	margin: 0;
	padding: 1px 0 0 46px;
	overflow: hidden;
	text-align: center;
	font-size: 11px;
	font-weight: bold;
	line-height: 16px;
}

/* part navigator */
.work {
	display: flex;
	flex: 1;
	min-height: 0;
}
.side {
	display: flex;
	flex-direction: column;
	flex: none;
	width: 185px;
	padding-bottom: 7px;
}
.title {
	display: flex;
	align-items: center;
	justify-content: space-between;
	height: 28px;
	padding: 2px 16px 0 0;
}
.title span {
	margin-left: -20px;
}
.max {
	width: 12px;
	height: 11px;
	border: 1px solid #111;
	border-top-width: 2px;
}
.frame {
	display: flex;
	flex-direction: column;
	flex: 1;
	min-height: 0;
	width: 176px;
	padding: 1px 2px 2px 0;
	border: solid #d8d8d8;
	border-width: 1px 1px 0 0;
}
.head {
	display: flex;
	align-items: center;
	height: 21px;
	overflow: hidden;
	background: #f0f0f0;
	border-bottom: 1px solid #ccc;
	white-space: nowrap;
}
.head .name {
	margin-left: -16px;
	width: 42px;
}
.head .layer {
	margin-left: auto;
	width: 21px;
	padding-left: 6px;
	border-left: 1px solid #ccc;
	overflow: hidden;
}
.tri {
	border: 3px solid transparent;
}
.tri.up {
	border-top: 0;
	border-bottom: 4px solid #333;
}
.tri.down {
	border-bottom: 0;
	border-top: 4px solid #333;
}
.tri.right {
	border-right: 0;
	border-left: 4px solid #333;
}
.tri.big {
	border-width: 0 5px 5px;
}
.body {
	display: flex;
	flex: 1;
	min-height: 0;
}
.list {
	position: relative;
	flex: 1;
	margin: 0;
	padding: 0;
	overflow: hidden;
	list-style: none;
}
.list::after {
	content: "";
	position: absolute;
	left: 152px;
	top: 0;
	bottom: 0;
	border-left: 1px solid #e6e6e6;
}
.list::before {
	content: "";
	position: absolute;
	left: 6px;
	top: 60px;
	bottom: 0;
	z-index: 1;
	border-left: 1px dotted #999;
}
.list li {
	display: flex;
	align-items: center;
	height: 20px;
	border-bottom: 1px solid #e8e8e8;
	line-height: 19px;
	white-space: nowrap;
}
.list li:nth-child(odd) {
	background: #fafafa;
}
.list svg {
	width: 16px;
	height: 16px;
}
.list .root {
	gap: 3px;
	margin-left: -3px;
}
.list .first {
	gap: 0;
}
.list .first span {
	margin-left: 3px;
}
.list .dim span {
	color: #a0a0a0;
}
.twig {
	position: relative;
	width: 10px;
	margin-left: 7px;
	margin-right: 1px;
	border-top: 1px dotted #999;
}
.twig b {
	position: absolute;
	z-index: 2;
	left: -5px;
	top: -5px;
	width: 9px;
	height: 9px;
	border: 1px solid #bbb;
	background: #fff;
	color: #111;
	font-size: 9px;
	line-height: 7px;
	text-align: center;
}
.list label {
	display: flex;
	align-items: center;
	gap: 2px;
}
.list label span {
	margin-left: 1px;
}
.list input {
	appearance: none;
	width: 12px;
	height: 12px;
	margin: 0;
	border: 1px solid #000;
	background: #fff;
}
.list input:checked::after {
	content: "";
	display: block;
	width: 10px;
	height: 10px;
	background: #08c428;
	clip-path: polygon(0 42%, 20% 36%, 38% 52%, 84% 2%, 100% 14%, 44% 98%, 30% 98%);
}
.vscroll {
	display: flex;
	flex-direction: column;
	align-items: center;
	width: 16px;
	padding: 7px 0 6px;
	background: #f0f0f0;
}
.vscroll .down {
	margin-top: auto;
}
.thumb,
.hthumb {
	display: flex;
	align-items: center;
	justify-content: center;
	gap: 1px;
	border: 1px solid #999;
	border-radius: 2px;
}
.thumb {
	flex-direction: column;
	width: 15px;
	height: 94px;
	margin-top: 22px;
	background: linear-gradient(90deg, #f4f4f4, #e4e4e4 50%, #c8c8cc);
}
.thumb i {
	width: 7px;
	height: 2px;
	background: #666;
}
.hscroll {
	display: flex;
	align-items: center;
	justify-content: space-between;
	width: 157px;
	height: 16px;
	padding-right: 6px;
	background: #f0f0f0;
}
.hthumb {
	width: 35px;
	height: 15px;
	margin-left: -3px;
	background: linear-gradient(#f4f4f4, #e0e0e0 50%, #c4c4c8);
}
.hthumb i {
	width: 2px;
	height: 7px;
	background: #666;
}
.ledge {
	width: 176px;
	height: 5px;
	background: #dcdcdc;
	border: solid #aaa;
	border-width: 1px 1px 1px 0;
}

/* graphics window */
.view {
	position: relative;
	flex: 1;
	min-width: 0;
	border-top: 2px solid #aaa;
	border-left: 1px solid #8c9094;
	background: linear-gradient(#b4b5b7, #c6c7c9 25%, #dcdee0 60%, #e5e7e9 82%, #e8eaec);
}
.scene {
	width: 100%;
	height: 100%;
}
.scene text {
	font: 12px "Liberation Sans", sans-serif;
}
.ime {
	position: absolute;
	right: 0;
	bottom: 37px;
	display: flex;
	align-items: center;
	gap: 4px;
	width: 137px;
	height: 22px;
	padding-left: 2px;
	overflow: hidden;
	border: 1px solid #9cb4c8;
	border-right: 0;
	background: linear-gradient(#fff, #f0f8ff);
}
.ime svg {
	width: 16px;
	height: 16px;
}
</style>
